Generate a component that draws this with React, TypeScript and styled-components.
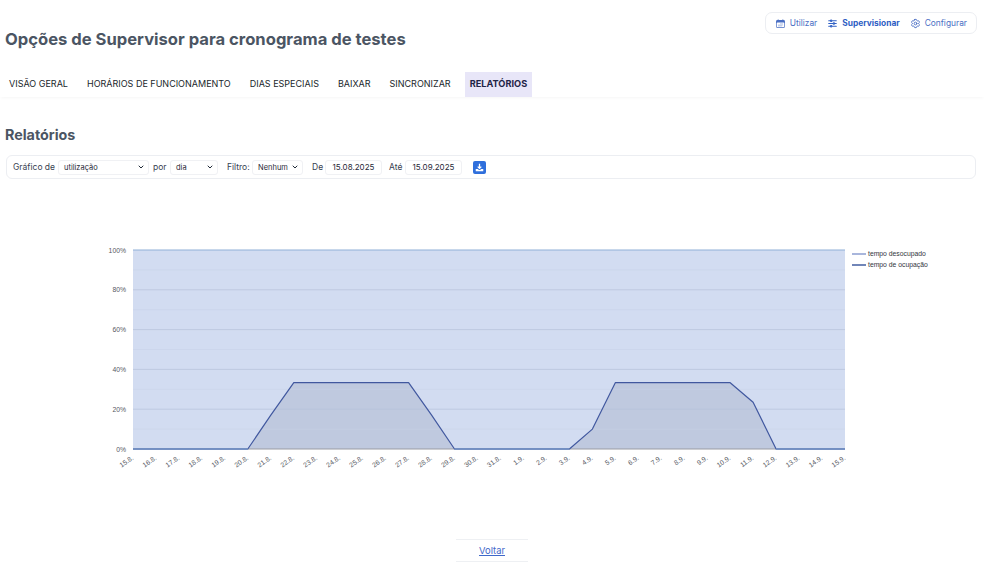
import React from 'react';
import styled, { createGlobalStyle } from 'styled-components';
import { ChevronDown } from 'lucide-react';
import { HiCalendarDays, HiOutlineAdjustmentsHorizontal, HiOutlineCog6Tooth } from 'react-icons/hi2';

const GlobalStyle = createGlobalStyle`
  html, body {
    margin: 0;
    padding: 0;
    background: #fff;
    font-family: Inter, 'Liberation Sans', sans-serif;
    color: #1f2937;
  }
`;

const Page = styled.div`
  width: 984px;
  height: 571px;
  overflow: hidden;
  display: flex;
  flex-direction: column;
  padding: 12px 7px 0 5px;
  box-sizing: border-box;
`;

const Header = styled.header`
  display: flex;
  justify-content: space-between;
  align-items: flex-start;
  height: 60px;
`;

const Title = styled.h1`
  margin: 17px 0 0;
  font-size: 16.6px;
  line-height: 20px;
  font-weight: 700;
  color: #4b5563;
`;

const RoleNav = styled.nav`
  display: flex;
  align-items: center;
  gap: 10px;
  height: 22px;
  padding: 0 9px;
  box-sizing: border-box;
  border: 1px solid #eceef2;
  border-radius: 7px;
`;

const RoleItem = styled.a<{ $active?: boolean }>`
  display: flex;
  align-items: center;
  gap: 4px;
  font-size: 8.4px;
  font-weight: ${p => (p.$active ? 700 : 400)};
  color: ${p => (p.$active ? '#2f5fc4' : '#4a6fc4')};
`;

const Tabs = styled.div`
  display: flex;
  gap: 9px;
  height: 25px;
  margin-left: -5px;
  margin-right: -7px;
  padding-left: 4px;
  box-shadow: 0 2px 3px -1px rgba(0, 0, 0, 0.04);
`;

const Tab = styled.div<{ $active?: boolean }>`
  display: flex;
  align-items: center;
  padding: 0 5px 2px;
  font-size: ${p => (p.$active ? 9.2 : 9)}px;
  font-weight: ${p => (p.$active ? 700 : 400)};
  color: ${p => (p.$active ? '#1f2447' : '#1a1f2b')};
  background: ${p => (p.$active ? '#e8e6f8' : 'transparent')};
  white-space: nowrap;
`;

const SectionTitle = styled.h2`
  margin: 29px 0 0;
  font-size: 14.3px;
  line-height: 18px;
  font-weight: 700;
  color: #4b5563;
`;

const FilterBar = styled.div`
  display: flex;
  align-items: center;
  height: 24px;
  box-sizing: border-box;
  margin: 11px 1px 0 1px;
  padding: 0 6px;
  border: 1px solid #eceef2;
  border-radius: 6px;
  font-size: 8.5px;
  color: #374151;
`;

const Label = styled.span<{ $gap?: number; $width: number }>`
  margin-left: ${p => p.$gap ?? 0}px;
  margin-right: 3px;
  width: ${p => p.$width}px;
  white-space: nowrap;
`;

const Field = styled.div<{ $width: number }>`
  display: flex;
  align-items: center;
  justify-content: space-between;
  width: ${p => p.$width}px;
  height: 15px;
  padding: 0 3px 0 5px;
  box-sizing: border-box;
  border: 1px solid #f0f1f4;
  border-radius: 3px;
  font-size: 7.5px;
  color: #1f2937;
`;

const DateField = styled(Field)`
  justify-content: center;
  padding: 0;
  font-size: 8px;
`;

const DownloadButton = styled.button`
  display: flex;
  align-items: center;
  justify-content: center;
  width: 13px;
  height: 13px;
  margin-left: 11px;
  padding: 0;
  border: 0;
  border-radius: 2px;
  background: #2f6fdc;
`;

const ChartWrap = styled.div`
  height: 360px;
  margin: 0 -7px 0 -5px;
`;

const Footer = styled.div`
  align-self: center;
  width: 72px;
  height: 23px;
  box-sizing: border-box;
  margin-left: 2px;
  padding-bottom: 1px;
  display: flex;
  align-items: center;
  justify-content: center;
  border-top: 1px solid #eef0f3;
  border-bottom: 1px solid #eef0f3;
  font-size: 9.4px;
`;

const BackLink = styled.a`
  color: #3f68c9;
  text-decoration: underline;
`;

const tabs = ['VISÃO GERAL', 'HORÁRIOS DE FUNCIONAMENTO', 'DIAS ESPECIAIS', 'BAIXAR', 'SINCRONIZAR', 'RELATÓRIOS'];

const busy: Record<number, number> = {
  6: 17, 7: 33.3, 8: 33.3, 9: 33.3, 10: 33.3, 11: 33.3, 12: 33.3, 13: 17,
  20: 10, 21: 33.3, 22: 33.3, 23: 33.3, 24: 33.3, 25: 33.3, 26: 33.3, 27: 23.5,
};

const days: string[] = [];
for (let d = 15; d <= 31; d++) days.push(`${d}.8.`);
for (let d = 1; d <= 15; d++) days.push(`${d}.9.`);

// chart frame inside the svg, which starts right under the filter bar
const LEFT = 133;
const RIGHT = 845;
const TOP = 71;
const BOTTOM = 270;
const xAt = (i: number) => LEFT + (i * (RIGHT - LEFT)) / 31;
const yAt = (v: number) => BOTTOM - (v / 100) * (BOTTOM - TOP);

function UsageChart() {
  const line = days.map((_, i) => `${xAt(i).toFixed(1)},${yAt(busy[i] ?? 0).toFixed(1)}`).join(' ');
  return (
    <svg width="984" height="360" viewBox="0 0 984 360">
      <rect x={LEFT} y={TOP} width={RIGHT - LEFT} height={BOTTOM - TOP} fill="#d2dcf1" />
      <polygon points={`${line} ${RIGHT},${BOTTOM} ${LEFT},${BOTTOM}`} fill="#bfc9df" />
      {[10, 30, 50, 70, 90].map(v => (
        <line key={v} x1={LEFT} x2={RIGHT} y1={yAt(v)} y2={yAt(v)} stroke="#c6d0e6" strokeWidth="0.5" />
      ))}
      {[20, 40, 60, 80].map(v => (
        <line key={v} x1={LEFT} x2={RIGHT} y1={yAt(v)} y2={yAt(v)} stroke="#b6c2da" strokeWidth="0.7" />
      ))}
      {[0, 20, 40, 60, 80, 100].map(v => (
        <text key={v} x={LEFT - 7} y={yAt(v) + 2.5} textAnchor="end" fontSize="6.8" fill="#55585f" fontFamily="'Liberation Sans', sans-serif">
          {v}%
        </text>
      ))}
      <line x1={LEFT} x2={RIGHT} y1={TOP} y2={TOP} stroke="#8fb0d8" strokeWidth="1.2" />
      <line x1={LEFT} x2={RIGHT} y1={BOTTOM} y2={BOTTOM} stroke="#9a9ca3" strokeWidth="1.2" />
      <polyline points={line} fill="none" stroke="#41589f" strokeWidth="1.2" strokeLinejoin="round" />
      <line x1={LEFT} x2={xAt(5)} y1={BOTTOM} y2={BOTTOM} stroke="#7191c7" strokeWidth="1.3" />
      <line x1={xAt(14)} x2={xAt(19)} y1={BOTTOM} y2={BOTTOM} stroke="#7191c7" strokeWidth="1.3" />
      <line x1={xAt(28)} x2={RIGHT} y1={BOTTOM} y2={BOTTOM} stroke="#7191c7" strokeWidth="1.3" />
      {days.map((d, i) => (
        <text
          key={d}
          transform={`translate(${xAt(i) + 1} ${BOTTOM + 10}) rotate(-35)`}
          textAnchor="end"
          fontSize="6.8"
          fill="#55585f"
          fontFamily="'Liberation Sans', sans-serif"
        >
          {d}
        </text>
      ))}
      <line x1="852" x2="866" y1="75" y2="75" stroke="#a9b6dc" strokeWidth="2" />
      <text x="868" y="76.5" fontSize="6.8" fill="#33363d" fontFamily="'Liberation Sans', sans-serif">tempo desocupado</text>
      <line x1="852" x2="866" y1="86" y2="86" stroke="#7186b8" strokeWidth="2" />
      <text x="868" y="87.5" fontSize="6.8" fill="#33363d" fontFamily="'Liberation Sans', sans-serif">tempo de ocupação</text>
    </svg>
  );
}

function App() {
  return (
    <Page>
      <GlobalStyle />
      <Header>
        <Title>Opções de Supervisor para cronograma de testes</Title>
        <RoleNav>
          <RoleItem>
            <HiCalendarDays size={11} />
            Utilizar
          </RoleItem>
          <RoleItem $active>
            <HiOutlineAdjustmentsHorizontal size={11} strokeWidth={2.4} />
            Supervisionar
          </RoleItem>
          <RoleItem>
            <HiOutlineCog6Tooth size={11} strokeWidth={2} />
            Configurar
          </RoleItem>
        </RoleNav>
      </Header>
      <Tabs>
        {tabs.map(t => (
          <Tab key={t} $active={t === 'RELATÓRIOS'}>
            {t}
          </Tab>
        ))}
      </Tabs>
      <SectionTitle>Relatórios</SectionTitle>
      <FilterBar>
        <Label $width={42}>Gráfico de</Label>
        <Field $width={91}>
          utilização
          <ChevronDown size={8} strokeWidth={3} />
        </Field>
        <Label $gap={4} $width={14}>por</Label>
        <Field $width={48}>
          dia
          <ChevronDown size={8} strokeWidth={3} />
        </Field>
        <Label $gap={9} $width={22}>Filtro:</Label>
        <Field $width={51}>
          Nenhum
          <ChevronDown size={8} strokeWidth={3} />
        </Field>
        <Label $gap={9} $width={10}>De</Label>
        <DateField $width={57}>15.08.2025</DateField>
        <Label $gap={7} $width={13}>Até</Label>
        <DateField $width={57}>15.09.2025</DateField>
        <DownloadButton>
          <svg width="9" height="9" viewBox="0 0 12 12" fill="none">
            <path d="M6 1v6M3.6 4.8 6 7.2l2.4-2.4" stroke="#fff" strokeWidth="1.7" />
            <path d="M1 8h3l1 1.2h2L8 8h3v3H1z" fill="#fff" />
          </svg>
        </DownloadButton>
      </FilterBar>
      <ChartWrap>
        <UsageChart />
      </ChartWrap>
      <Footer>
        <BackLink>Voltar</BackLink>
      </Footer>
    </Page>
  );
}

export default App;
